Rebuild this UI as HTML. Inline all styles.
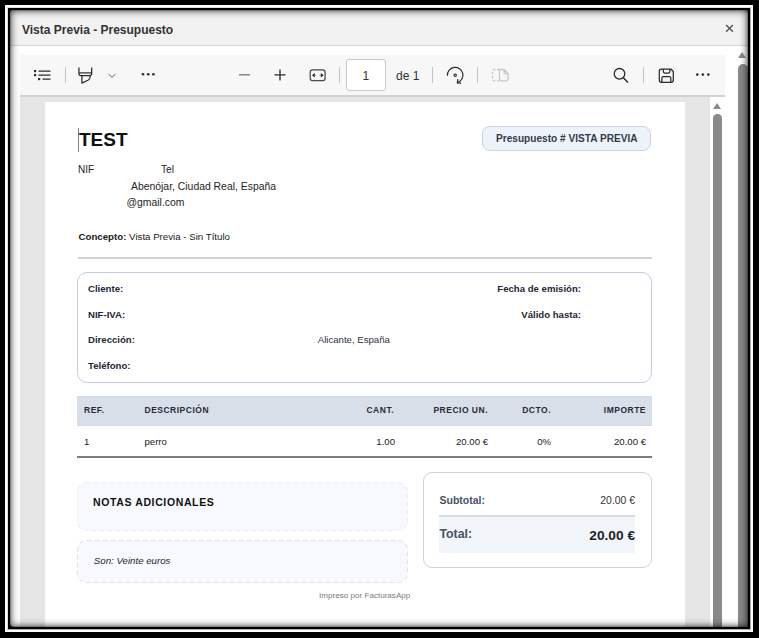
<!DOCTYPE html>
<html><head><meta charset="utf-8">
<style>
*{margin:0;padding:0;box-sizing:border-box}
html,body{width:759px;height:638px;overflow:hidden;background:#000}
body{position:relative;font-family:"Liberation Sans",sans-serif}
.a{position:absolute}
.t{position:absolute;white-space:nowrap;line-height:1}
.r{position:absolute;white-space:nowrap;line-height:1;text-align:right}
.b{font-weight:bold}
.sep{position:absolute;width:1px;height:16px;top:67px;background:#c4c4c4}
.thumb{position:absolute;background:#8a8a8a;border-radius:5px}
.arrow{position:absolute;width:0;height:0;border-left:4.5px solid transparent;border-right:4.5px solid transparent;border-bottom:6px solid #8a8a8a}
.lab{font-size:9.6px;font-weight:bold;color:#1f2633}
.th{font-size:8.5px;font-weight:bold;letter-spacing:.5px;color:#252b38}
.td{font-size:9.6px;color:#222}
</style></head><body>
<div class="a" style="left:5px;top:5px;width:748px;height:627px;background:#fff"></div>
<div class="a" style="left:7px;top:7px;width:744px;height:623px;background:#000;border-top:1px solid #e0e0e0;border-left:1px solid #e0e0e0;border-right:1px solid #b0b0b0;border-bottom:1px solid #b0b0b0"></div>
<div class="a" style="left:10px;top:10px;width:738px;height:617px;background:#fff;border-radius:4px"></div>
<!-- title bar -->
<div class="a" style="left:10px;top:10px;width:738px;height:36px;background:#f2f2f2;border-bottom:1px solid #d6d6d6;border-radius:4px 4px 0 0"></div>
<div class="t b" style="left:22px;top:23.5px;font-size:12px;color:#333">Vista Previa - Presupuesto</div>
<svg class="a" style="left:724px;top:23px" width="11" height="11" viewBox="0 0 11 11"><path d="M2.1 2.1L8.9 8.8M8.9 2.1L2.1 8.8" stroke="#555" stroke-width="1.45"/></svg>

<!-- toolbar -->
<div class="a" style="left:20px;top:55px;width:705px;height:42px;background:#f7f7f7;border-bottom:2px solid #d2d2d2"></div>
<svg class="a" style="left:20px;top:55px" width="705" height="40" viewBox="0 0 705 40" fill="none" stroke="#2b2b2b" stroke-width="1.3">
  <!-- list -->
  <rect x="14" y="15" width="2.2" height="2.2" fill="#2b2b2b" stroke="none"/>
  <rect x="14" y="19" width="2.2" height="2.2" fill="#2b2b2b" stroke="none"/>
  <rect x="18" y="23" width="2.2" height="2.2" fill="#2b2b2b" stroke="none"/>
  <path d="M18.5 16.1H30.5M18.5 20.1H30.5M22.5 24.1H30.5"/>
  <!-- highlighter -->
  <path d="M58.9 12.6V18.6Q58.9 20.5 60.8 20.5H69.8Q71.7 20.5 71.7 18.6V12.6" stroke-width="1.25"/>
  <path d="M59.2 17.9H71.4" stroke-width="1.2"/>
  <path d="M61.9 20.5V28.1L68 25.3Q69.8 24.4 70.1 22V20.5" stroke-width="1.25" stroke-linejoin="round"/>
  <!-- chevron -->
  <path d="M88.5 19L92 22.3L95.5 19" stroke="#666" stroke-width="1"/>
  <!-- dots -->
  <circle cx="123" cy="19.3" r="1.3" fill="#2b2b2b" stroke="none"/>
  <circle cx="128.2" cy="19.3" r="1.3" fill="#2b2b2b" stroke="none"/>
  <circle cx="133.4" cy="19.3" r="1.3" fill="#2b2b2b" stroke="none"/>
  <!-- minus -->
  <path d="M219 19.8H230" stroke="#777"/>
  <!-- plus -->
  <path d="M254.5 19.8H265.5M260 14.5V25.5"/>
  <!-- fit -->
  <rect x="290.2" y="14.9" width="14.9" height="10.7" rx="2.3" stroke="#4a4a4a" stroke-width="1.25"/>
  <path d="M292 20.3L294.8 18V22.6Z M303.6 20.3L300.8 18V22.6Z" fill="#222" stroke="none"/>
  <path d="M294.5 20.3H296.2M299.4 20.3H301.1" stroke="#999" stroke-width="1.1"/>
  <!-- rotate -->
  <path d="M427.4 20.8A7.8 7.8 0 1 1 437.4 27.6" stroke-width="1.2"/>
  <path d="M437.9 24.2L437.3 27.9L441 28.2" stroke-width="1.2" stroke-linejoin="round"/>
  <circle cx="435.2" cy="20.3" r="1.2" stroke-width="1.1"/>
  <!-- disabled -->
  <path d="M479.5 14.5H474.5Q472.5 14.5 472.5 16.5V23.8Q472.5 25.8 474.5 25.8H479.5" stroke="#c8c8c8" stroke-width="1.3" stroke-dasharray="2.5 1.6"/>
  <path d="M479.5 14.5H484L488 18.5V23.8Q488 25.8 486 25.8H481.5Q479.5 25.8 479.5 23.8Z M484 14.5V17Q484 18.5 485.5 18.5H488" stroke="#c8c8c8" stroke-width="1.3" stroke-linejoin="round"/>
  <!-- search -->
  <circle cx="599.5" cy="18.8" r="5.3"/>
  <path d="M603.4 22.7L608 27.4" stroke-width="1.5"/>
  <!-- save -->
  <path d="M641.3 14H650.8L653.3 16.5V25Q653.3 27.3 651 27.3H641.5Q639.3 27.3 639.3 25V16.2Q639.3 14 641.3 14Z" stroke-linejoin="round" stroke-width="1.25"/>
  <path d="M643.3 14V16.6Q643.3 18 644.7 18H648.5Q649.9 18 649.9 16.6V14M641.9 27.3V23Q641.9 21.6 643.3 21.6H649.4Q650.8 21.6 650.8 23V27.3" stroke-width="1.25"/>
  <!-- dots -->
  <circle cx="677.3" cy="19.6" r="1.3" fill="#2b2b2b" stroke="none"/>
  <circle cx="682.8" cy="19.6" r="1.3" fill="#2b2b2b" stroke="none"/>
  <circle cx="688.3" cy="19.6" r="1.3" fill="#2b2b2b" stroke="none"/>
</svg>
<div class="sep" style="left:65px"></div>
<div class="sep" style="left:339px"></div>
<div class="sep" style="left:432px"></div>
<div class="sep" style="left:477px"></div>
<div class="sep" style="left:643px"></div>
<div class="a" style="left:346px;top:59px;width:40px;height:32px;background:#fff;border:1px solid #c9c9c9;border-radius:3px"></div>
<div class="t" style="left:362.5px;top:69.5px;font-size:12px;color:#333">1</div>
<div class="t" style="left:396px;top:69.5px;font-size:12px;color:#333">de 1</div>

<!-- viewer -->
<div class="a" style="left:20px;top:97px;width:690px;height:530px;background:#e6e6e6"></div>
<div class="a" style="left:45px;top:102px;width:640px;height:525px;background:#fff"></div>
<!-- inner scrollbar -->
<div class="arrow" style="left:713px;top:102.5px"></div>
<div class="thumb" style="left:713px;top:114px;width:9px;height:513px;border-radius:5px 5px 0 0"></div>
<!-- outer scrollbar -->
<div class="arrow" style="left:738px;top:52px"></div>
<div class="thumb" style="left:738px;top:64px;width:9.5px;height:563px;border-radius:5px 5px 0 0"></div>

<!-- page content -->
<div class="a" style="left:78px;top:128px;width:1px;height:24px;background:#808080"></div>
<div class="t b" style="left:79px;top:130px;font-size:19px;color:#111">TEST</div>
<div class="t" style="left:78px;top:164.8px;font-size:10px;color:#1e1e1e">NIF</div>
<div class="t" style="left:161px;top:164.8px;font-size:10.2px;color:#1e1e1e">Tel</div>
<div class="t" style="left:131px;top:182px;font-size:10.4px;color:#1e1e1e">Abenójar, Ciudad Real, España</div>
<div class="t" style="left:126.5px;top:198px;font-size:10.4px;color:#1e1e1e">@gmail.com</div>
<div class="t" style="left:78.5px;top:231.7px;font-size:9.7px;color:#1a1a1a"><b>Concepto:</b> Vista Previa - Sin Título</div>
<div class="a" style="left:78px;top:257px;width:574px;height:2px;background:#d2d2d2"></div>

<div class="a" style="left:482px;top:126px;width:169px;height:25px;background:#eef3fb;border:1px solid #c8d3e5;border-radius:8px"></div>
<div class="t b" style="left:496px;top:134px;font-size:10.12px;color:#333b4a">Presupuesto # VISTA PREVIA</div>

<div class="a" style="left:77px;top:272px;width:575px;height:111px;border:1px solid #c3cddd;border-radius:10px"></div>
<div class="t lab" style="left:88px;top:284px">Cliente:</div>
<div class="t lab" style="left:88px;top:310px">NIF-IVA:</div>
<div class="t lab" style="left:88px;top:335px">Dirección:</div>
<div class="t lab" style="left:88px;top:361px">Teléfono:</div>
<div class="t" style="left:313px;top:335px;font-size:9.6px;color:#2d3340"><span style="color:#c8ccd4">.</span> Alicante, España</div>
<div class="r lab" style="left:481px;top:284px;width:100px">Fecha de emisión:</div>
<div class="r lab" style="left:481px;top:310px;width:100px">Válido hasta:</div>

<div class="a" style="left:77px;top:396px;width:575px;height:30px;background:#d9dfe9;border-top:1px solid #d3d9e4;border-bottom:1px solid #d3d9e4"></div>
<div class="t th" style="left:84px;top:406px">REF.</div>
<div class="t th" style="left:144.5px;top:406px">DESCRIPCIÓN</div>
<div class="r th" style="left:294px;top:406px;width:100px">CANT.</div>
<div class="r th" style="left:388px;top:406px;width:100px">PRECIO UN.</div>
<div class="r th" style="left:451px;top:406px;width:100px">DCTO.</div>
<div class="r th" style="left:546px;top:406px;width:100px">IMPORTE</div>
<div class="t td" style="left:84px;top:437px">1</div>
<div class="t td" style="left:144.5px;top:437px">perro</div>
<div class="r td" style="left:295px;top:437px;width:100px">1.00</div>
<div class="r td" style="left:388px;top:437px;width:100px">20.00 €</div>
<div class="r td" style="left:451px;top:437px;width:100px">0%</div>
<div class="r td" style="left:546px;top:437px;width:100px">20.00 €</div>
<div class="a" style="left:77px;top:456px;width:575px;height:2px;background:#7c7c7c"></div>

<svg class="a" style="left:77px;top:482px" width="331" height="49"><rect x="0.5" y="0.5" width="330" height="48" rx="9" fill="#f8f9fe" stroke="#eceef5" stroke-dasharray="5 3"/></svg>
<div class="t b" style="left:93px;top:497.2px;font-size:10.5px;letter-spacing:.62px;color:#111">NOTAS ADICIONALES</div>
<svg class="a" style="left:77px;top:540px" width="331" height="43"><rect x="0.5" y="0.5" width="330" height="42" rx="9" fill="#f8f9fe" stroke="#dde1ea" stroke-dasharray="5 3"/></svg>
<div class="t" style="left:93.8px;top:556.4px;font-size:9.7px;font-style:italic;color:#262626">Son: Veinte euros</div>

<div class="a" style="left:423px;top:472px;width:229px;height:96px;border:1px solid #cbd4e3;border-radius:9px"></div>
<div class="t b" style="left:439.5px;top:495px;font-size:10.5px;color:#475366">Subtotal:</div>
<div class="r" style="left:535px;top:496px;width:100px;font-size:10.4px;color:#333">20.00 €</div>
<div class="a" style="left:439px;top:515px;width:196px;height:38px;background:#f2f5fa;border-top:2px solid #d3dbe8"></div>
<div class="t b" style="left:439.5px;top:528px;font-size:12.3px;color:#475366">Total:</div>
<div class="r b" style="left:535px;top:529px;width:100px;font-size:13.7px;color:#1a1f2b">20.00 €</div>

<div class="t" style="left:319px;top:592px;font-size:8.1px;color:#7a7a7a">Impreso por FacturasApp</div>

<!-- dialog inner shadow -->
<div class="a" style="left:10px;top:10px;width:738px;height:617px;border-radius:4px 4px 0 0;box-shadow:inset 0 0 2px 0 rgba(0,0,0,.6),inset 0 0 6px 0 rgba(0,0,0,.65),inset 0 0 10px 1px rgba(0,0,0,.3)"></div>
</body></html>
